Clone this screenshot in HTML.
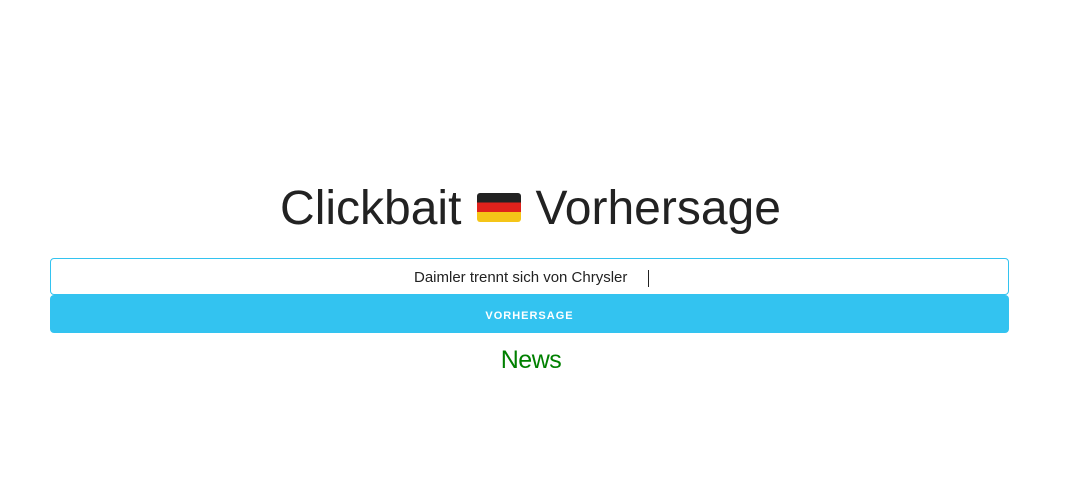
<!DOCTYPE html>
<html><head><meta charset="utf-8"><style>
html,body{margin:0;padding:0;background:#fff;width:1081px;height:481px;overflow:hidden;font-family:"Liberation Sans",Arial,sans-serif;}
.t{position:absolute;top:179px;left:0px;width:1061px;text-align:center;font-size:48px;color:#222;line-height:60px;white-space:nowrap;}
.flag{display:inline-block;width:44px;height:29px;vertical-align:2px;margin:0 14px 0 16px;border-radius:3px;background:linear-gradient(#222 0 33%,#e0221c 33% 66%,#f5c518 66%);}
.inp{position:absolute;left:50px;top:258px;width:957px;height:35px;border:1px solid #33c3f0;border-radius:4px;font-size:15px;line-height:38px;color:#222;box-sizing:content-box;}
.txt{position:absolute;left:363px;top:0;white-space:nowrap;}
.caret{position:absolute;left:597px;top:11px;width:1px;height:17px;background:#222;}
.btn{position:absolute;left:50px;top:295px;width:959px;height:38px;background:#33c3f0;border-radius:4px;color:#fff;font-weight:bold;font-size:11px;letter-spacing:1px;text-align:center;line-height:43px;}
.news{position:absolute;top:344px;left:0;width:1062px;text-align:center;color:#008000;font-size:25px;line-height:32px;letter-spacing:-0.5px;}
</style></head><body>
<div class="t">Clickbait<span class="flag"></span>Vorhersage</div>
<div class="inp"><span class="txt">Daimler trennt sich von Chrysler</span><span class="caret"></span></div>
<div class="btn">VORHERSAGE</div>
<div class="news">News</div>
</body></html>
